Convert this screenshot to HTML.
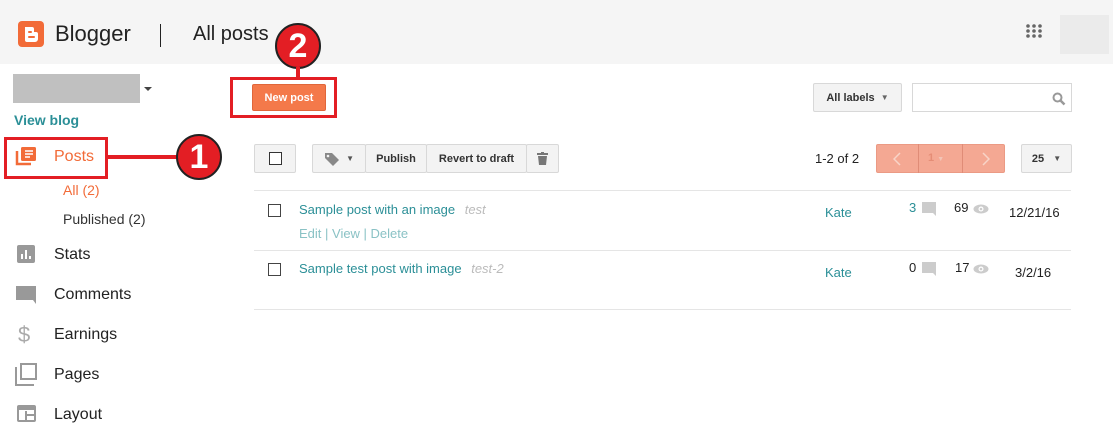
<!DOCTYPE html>
<html><head><meta charset="utf-8"><style>
*{margin:0;padding:0;box-sizing:border-box}
body{width:1113px;height:440px;overflow:hidden;background:#fff;font-family:"Liberation Sans",Arial,sans-serif;position:relative;color:#222}
.a{position:absolute;white-space:nowrap}
.btn{position:absolute;border:1px solid #d8d8d8;background:#f3f3f3;border-radius:2px;font-size:11px;font-weight:bold;color:#333;display:flex;align-items:center;justify-content:center}
.nav{position:absolute;left:54px;font-size:16px;color:#222}
.cb{position:absolute;width:13px;height:13px;border:1px solid #444;background:#fff}
.circ{position:absolute;width:46px;height:46px;border-radius:50%;background:#e31e24;border:2px solid #222;color:#fff;font-size:34px;font-weight:bold;display:flex;align-items:center;justify-content:center}
.teal{color:#2b8f97}
.line{position:absolute;left:254px;width:817px;height:1px;background:#e5e5e5}
</style></head><body>
<div class="a" style="left:0;top:0;width:1113px;height:64px;background:#f5f5f5"></div>
<svg class="a" style="left:18px;top:21px" width="26" height="26"><rect width="26" height="26" rx="4" fill="#f26b38"/><path d="M7 6h7a2 2 0 0 1 2 2v3h2a2 2 0 0 1 2 2v5a3 3 0 0 1-3 3H9a2 2 0 0 1-2-2z" fill="#fff"/><rect x="10" y="10" width="4" height="2" rx="1" fill="#f26b38"/><rect x="10" y="15" width="7" height="2" rx="1" fill="#f26b38"/></svg>
<div class="a" style="left:55px;top:21px;font-size:22px;color:#222">Blogger</div>
<div class="a" style="left:160px;top:24px;width:1px;height:23px;background:#222"></div>
<div class="a" style="left:193px;top:23px;font-size:20px;color:#222">All posts</div>
<svg class="a" style="left:1025px;top:23px" width="18" height="16"><g fill="#666"><circle cx="3" cy="3" r="1.8"/><circle cx="9" cy="3" r="1.8"/><circle cx="15" cy="3" r="1.8"/><circle cx="3" cy="8" r="1.8"/><circle cx="9" cy="8" r="1.8"/><circle cx="15" cy="8" r="1.8"/><circle cx="3" cy="13" r="1.8"/><circle cx="9" cy="13" r="1.8"/><circle cx="15" cy="13" r="1.8"/></g></svg>
<div class="a" style="left:1060px;top:15px;width:49px;height:39px;background:#ebebeb"></div>

<div class="a" style="left:13px;top:74px;width:127px;height:29px;background:#c0c0c0"></div>
<div class="a" style="left:144px;top:87px;border:4px solid transparent;border-top:4px solid #444"></div>
<div class="a" style="left:14px;top:112px;font-size:14px;font-weight:bold;color:#2b8f97">View blog</div>

<div class="a" style="left:4px;top:137px;width:104px;height:42px;border:3px solid #e31e24"></div>
<svg class="a" style="left:15px;top:146px" width="22" height="20"><path d="M2 5v13h14" fill="none" stroke="#f26b38" stroke-width="2.5"/><rect x="6" y="1" width="15" height="14" rx="1.5" fill="#f26b38"/><path d="M10 5h8M10 8h8M10 11h5" stroke="#fff" stroke-width="1.6"/></svg>
<div class="a" style="left:54px;top:148px;font-size:16px;color:#f26b38">Posts</div>
<div class="a" style="left:108px;top:155px;width:72px;height:4px;background:#e31e24"></div>
<div class="circ" style="left:176px;top:134px">1</div>
<div class="a" style="left:63px;top:182px;font-size:14px;color:#f26b38">All (2)</div>
<div class="a" style="left:63px;top:211px;font-size:14px;color:#333">Published (2)</div>

<svg class="a" style="left:17px;top:245px" width="18" height="18"><rect width="18" height="18" rx="2" fill="#999"/><path d="M5 14V9M9 14V5M13 14v-3" stroke="#fff" stroke-width="2"/></svg>
<div class="nav" style="top:246px">Stats</div>
<svg class="a" style="left:16px;top:285px" width="20" height="20"><path d="M0 1v14h17l3 4V1z" fill="#999"/></svg>
<div class="nav" style="top:286px">Comments</div>
<div class="a" style="left:18px;top:322px;font-size:22px;color:#aaa">$</div>
<div class="nav" style="top:326px">Earnings</div>
<svg class="a" style="left:15px;top:363px" width="23" height="23"><path d="M1 4v18h18" fill="none" stroke="#999" stroke-width="2"/><rect x="6" y="1" width="15" height="15" fill="none" stroke="#999" stroke-width="2"/></svg>
<div class="nav" style="top:366px">Pages</div>
<svg class="a" style="left:17px;top:405px" width="19" height="17"><rect x="1" y="1" width="17" height="15" rx="1" fill="none" stroke="#999" stroke-width="2"/><rect x="1" y="1" width="17" height="4" fill="#999"/><path d="M9 6v10M9 10h9" stroke="#999" stroke-width="2"/></svg>
<div class="nav" style="top:406px">Layout</div>

<div class="circ" style="left:275px;top:23px">2</div>
<div class="a" style="left:296px;top:67px;width:4px;height:12px;background:#e31e24"></div>
<div class="a" style="left:230px;top:77px;width:107px;height:41px;border:3px solid #e31e24"></div>
<div class="a" style="left:252px;top:84px;width:74px;height:27px;background:#f4794a;border:1px solid #e0663a;border-radius:2px;color:#fff;font-size:11px;font-weight:bold;display:flex;align-items:center;justify-content:center">New post</div>

<div class="btn" style="left:813px;top:83px;width:89px;height:29px">All labels&nbsp;&nbsp;<span style="font-size:8px;color:#666">▼</span></div>
<div class="a" style="left:912px;top:83px;width:160px;height:29px;border:1px solid #d8d8d8;background:#fff"></div>
<svg class="a" style="left:1052px;top:92px" width="14" height="14"><circle cx="5.5" cy="5.5" r="4" fill="none" stroke="#999" stroke-width="2"/><path d="M8.5 8.5l4 4" stroke="#999" stroke-width="2.5"/></svg>

<div class="btn" style="left:254px;top:144px;width:42px;height:29px"><div style="width:13px;height:13px;border:1px solid #333;background:#fff"></div></div>
<div class="btn" style="left:312px;top:144px;width:54px;height:29px"><svg width="16" height="14"><path d="M1 1h7l7 7-6 6-8-8z" fill="#888"/><circle cx="4" cy="4" r="1.3" fill="#f3f3f3"/></svg>&nbsp;&nbsp;<span style="font-size:8px;color:#555">▼</span></div>
<div class="btn" style="left:365px;top:144px;width:62px;height:29px">Publish</div>
<div class="btn" style="left:426px;top:144px;width:101px;height:29px">Revert to draft</div>
<div class="btn" style="left:526px;top:144px;width:33px;height:29px"><svg width="11" height="13"><rect x="0" y="1" width="11" height="2" fill="#777"/><rect x="4" y="0" width="3" height="2" fill="#777"/><path d="M1 4h9l-1 9H2z" fill="#777"/></svg></div>

<div class="a" style="left:815px;top:151px;font-size:13px;color:#222">1-2 of 2</div>
<div class="a" style="left:876px;top:144px;width:129px;height:29px;background:#f4a893;border:1px solid #eb9a84;border-radius:2px"></div>
<div class="a" style="left:918px;top:144px;width:1px;height:29px;background:#e08c77"></div>
<div class="a" style="left:962px;top:144px;width:1px;height:29px;background:#e08c77"></div>
<svg class="a" style="left:893px;top:152px" width="8" height="14"><path d="M7 1L1 7l6 6" fill="none" stroke="#f8d4c8" stroke-width="1.5"/></svg>
<div class="a" style="left:928px;top:152px;font-size:11px;font-weight:bold;color:#e58d76">1 <span style="font-size:7px;color:#f3c4b6">▼</span></div>
<svg class="a" style="left:982px;top:152px" width="8" height="14"><path d="M1 1l6 6-6 6" fill="none" stroke="#f8d4c8" stroke-width="1.5"/></svg>
<div class="btn" style="left:1021px;top:144px;width:51px;height:29px">25&nbsp;&nbsp;&nbsp;<span style="font-size:8px;color:#555">▼</span></div>

<div class="line" style="top:190px"></div>
<div class="line" style="top:250px"></div>
<div class="line" style="top:309px"></div>

<div class="cb" style="left:268px;top:204px"></div>
<div class="a teal" style="left:299px;top:202px;font-size:13px">Sample post with an image <span style="color:#bbb;font-style:italic;margin-left:6px">test</span></div>
<div class="a" style="left:299px;top:226px;font-size:13px;color:#8ac2c5">Edit | View | Delete</div>
<div class="a teal" style="left:825px;top:205px;font-size:13px">Kate</div>
<div class="a teal" style="left:909px;top:200px;font-size:13px">3</div>
<svg class="a" style="left:922px;top:202px" width="15" height="14"><path d="M0 0h14v14l-3-3H0z" fill="#ccc"/></svg>
<div class="a" style="left:954px;top:200px;font-size:13px">69</div>
<svg class="a" style="left:973px;top:204px" width="16" height="10"><ellipse cx="8" cy="5" rx="7.5" ry="4.5" fill="#ccc"/><circle cx="8" cy="5" r="2.5" fill="#fff"/><circle cx="8" cy="5" r="1.3" fill="#ccc"/></svg>
<div class="a" style="left:1009px;top:205px;font-size:13px">12/21/16</div>

<div class="cb" style="left:268px;top:263px"></div>
<div class="a teal" style="left:299px;top:261px;font-size:13px">Sample test post with image <span style="color:#bbb;font-style:italic;margin-left:6px">test-2</span></div>
<div class="a teal" style="left:825px;top:265px;font-size:13px">Kate</div>
<div class="a" style="left:909px;top:260px;font-size:13px">0</div>
<svg class="a" style="left:922px;top:262px" width="15" height="14"><path d="M0 0h14v14l-3-3H0z" fill="#ccc"/></svg>
<div class="a" style="left:955px;top:260px;font-size:13px">17</div>
<svg class="a" style="left:973px;top:264px" width="16" height="10"><ellipse cx="8" cy="5" rx="7.5" ry="4.5" fill="#ccc"/><circle cx="8" cy="5" r="2.5" fill="#fff"/><circle cx="8" cy="5" r="1.3" fill="#ccc"/></svg>
<div class="a" style="left:1015px;top:265px;font-size:13px">3/2/16</div>
</body></html>
